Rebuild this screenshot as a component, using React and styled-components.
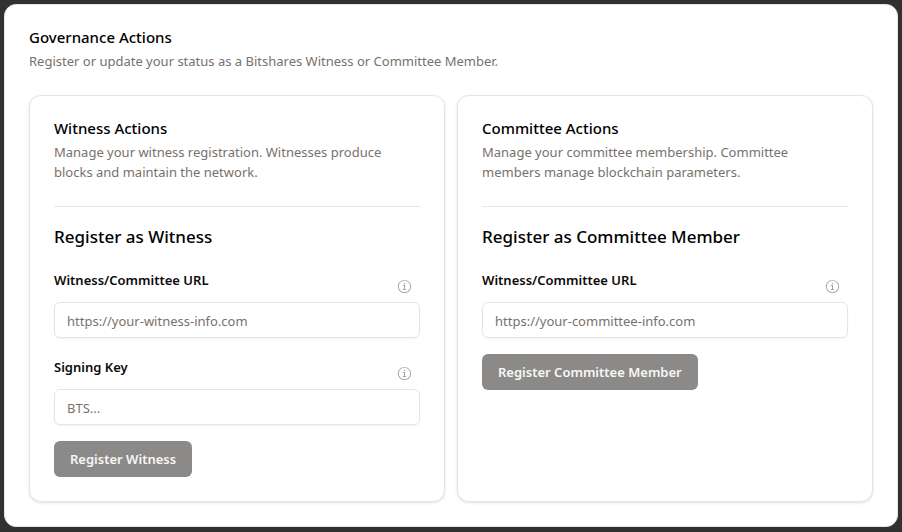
import styled, { createGlobalStyle } from "styled-components";

const GlobalStyle = createGlobalStyle`
  * {
    box-sizing: border-box;
  }
  body {
    margin: 0;
    padding: 4px;
    background: #313131;
    color: #0c0a09;
    font-family: "Noto Sans", "Open Sans", sans-serif;
    font-size: 14px;
    line-height: 20px;
  }
`;

const Card = styled.section`
  padding: 24px;
  border: 1px solid #e5e5e5;
  border-radius: 12px;
  background: #fff;
  box-shadow: ${(p) => (p.$raised ? "0 1px 3px rgba(0, 0, 0, 0.12)" : "none")};
`;

const CardHeader = styled.header`
  display: flex;
  flex-direction: column;
  gap: 6px;
  margin-bottom: 24px;
`;

const PageTitle = styled.h1`
  margin: 0;
  color: #000;
  font-size: 15px;
  font-weight: 500;
  line-height: 16px;
`;

const CardTitle = styled(PageTitle).attrs({ as: "h2" })``;

const Description = styled.p`
  margin: 0;
  color: #78716c;
  font-size: 13px;
`;

const Columns = styled.div`
  display: grid;
  grid-template-columns: 1fr 1fr;
  gap: 12px;

  @media (max-width: 640px) {
    grid-template-columns: 1fr;
  }
`;

const Separator = styled.hr`
  height: 1px;
  margin: 0 0 16px;
  border: 0;
  background: #e5e5e5;
`;

const Form = styled.form`
  display: flex;
  flex-direction: column;
  align-items: flex-start;
  gap: 16px;
`;

const FormTitle = styled.h3`
  margin: 0;
  color: #000;
  font-size: 17px;
  font-weight: 500;
  line-height: 28px;
`;

const FieldWrapper = styled.div`
  width: 100%;
`;

const FieldHeader = styled.div`
  display: flex;
  align-items: flex-end;
  justify-content: space-between;
  padding-bottom: 8px;
`;

const Label = styled.label`
  font-size: 13px;
  font-weight: 600;
  line-height: 27px;
`;

const InfoButton = styled.button`
  display: flex;
  padding: 0 8px;
  border: 0;
  background: none;
  color: #9ca3af;
  cursor: pointer;
`;

const Input = styled.input`
  display: block;
  width: 100%;
  height: 36px;
  padding: 5px 12px 4px;
  border: 1px solid #e5e5e5;
  border-radius: 6px;
  background: transparent;
  box-shadow: 0 1px 2px rgba(0, 0, 0, 0.05);
  color: inherit;
  font: inherit;
  font-size: 13px;

  &::placeholder {
    color: #78716c;
    opacity: 1;
  }
`;

const SubmitButton = styled.button`
  height: 36px;
  padding: 0 16px;
  border: 0;
  border-radius: 6px;
  background: #8c8a88;
  color: #f7f7f6;
  font: inherit;
  font-size: 13px;
  font-weight: 600;
`;

const InfoIcon = () => (
  <svg width="15" height="15" viewBox="0 0 15 15" fill="none" aria-hidden="true">
    <path
      d="M7.5 0.877C3.842 0.877 0.877 3.842 0.877 7.5C0.877 11.157 3.842 14.123 7.5 14.123C11.158 14.123 14.123 11.157 14.123 7.5C14.123 3.842 11.158 0.877 7.5 0.877ZM1.827 7.5C1.827 4.367 4.367 1.827 7.5 1.827C10.633 1.827 13.173 4.367 13.173 7.5C13.173 10.633 10.633 13.173 7.5 13.173C4.367 13.173 1.827 10.633 1.827 7.5ZM8.25 4.5C8.25 4.914 7.914 5.25 7.5 5.25C7.086 5.25 6.75 4.914 6.75 4.5C6.75 4.086 7.086 3.75 7.5 3.75C7.914 3.75 8.25 4.086 8.25 4.5ZM6 6H7.5C7.776 6 8 6.224 8 6.5V10H9V11H6V10H7V7H6V6Z"
      fill="currentColor"
      fillRule="evenodd"
      clipRule="evenodd"
    />
  </svg>
);

const Field = ({ id, label, placeholder }) => (
  <FieldWrapper>
    <FieldHeader>
      <Label htmlFor={id}>{label}</Label>
      <InfoButton type="button" aria-label={`About ${label}`}>
        <InfoIcon />
      </InfoButton>
    </FieldHeader>
    <Input id={id} type="text" placeholder={placeholder} />
  </FieldWrapper>
);

const ActionCard = ({ title, description, formTitle, fields, submit }) => {
  return (
    <Card $raised>
      <CardHeader>
        <CardTitle>{title}</CardTitle>
        <Description>{description}</Description>
      </CardHeader>
      <Separator />
      <Form>
        <FormTitle>{formTitle}</FormTitle>
        {fields.map((field) => (
          <Field key={field.id} {...field} />
        ))}
        <SubmitButton type="submit" disabled>
          {submit}
        </SubmitButton>
      </Form>
    </Card>
  );
};

const App = () => {
  return (
    <>
      <GlobalStyle />
      <Card as="main">
        <CardHeader>
          <PageTitle>Governance Actions</PageTitle>
          <Description>
            Register or update your status as a Bitshares Witness or Committee
            Member.
          </Description>
        </CardHeader>
        <Columns>
          <ActionCard
            title="Witness Actions"
            description="Manage your witness registration. Witnesses produce blocks and maintain the network."
            formTitle="Register as Witness"
            fields={[
              {
                id: "witness-url",
                label: "Witness/Committee URL",
                placeholder: "https://your-witness-info.com",
              },
              {
                id: "signing-key",
                label: "Signing Key",
                placeholder: "BTS...",
              },
            ]}
            submit="Register Witness"
          />
          <ActionCard
            title="Committee Actions"
            description="Manage your committee membership. Committee members manage blockchain parameters."
            formTitle="Register as Committee Member"
            fields={[
              {
                id: "committee-url",
                label: "Witness/Committee URL",
                placeholder: "https://your-committee-info.com",
              },
            ]}
            submit="Register Committee Member"
          />
        </Columns>
      </Card>
    </>
  );
};

export default App;
